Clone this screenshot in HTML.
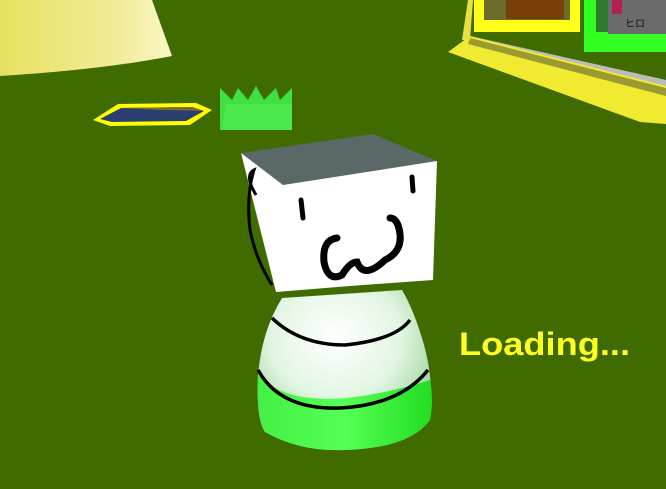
<!DOCTYPE html>
<html><head><style>html,body{margin:0;padding:0;background:#3f6b00;overflow:hidden}</style></head>
<body>
<svg width="666" height="484" viewBox="0 0 666 484" xmlns="http://www.w3.org/2000/svg">
<defs>
<linearGradient id="cone" x1="0" y1="0" x2="1" y2="0">
<stop offset="0" stop-color="#e8e060"/><stop offset="0.7" stop-color="#f2ec9a"/><stop offset="1" stop-color="#fbf7c8"/></linearGradient>
<radialGradient id="body" cx="0.45" cy="0.3" r="0.75">
<stop offset="0" stop-color="#ffffff"/><stop offset="0.5" stop-color="#e2f5e2"/><stop offset="1" stop-color="#7fc87f"/></radialGradient>
<linearGradient id="band" x1="0" y1="0" x2="1" y2="0">
<stop offset="0" stop-color="#44f044"/><stop offset="0.5" stop-color="#55ff55"/><stop offset="1" stop-color="#22dd22"/></linearGradient>
</defs>
<rect width="666" height="484" fill="#3f6b00"/>
<path d="M0 0 L152 0 L172 56 Q100 70 0 76 Z" fill="url(#cone)"/>
<path d="M470 36 L666 80 L666 122 L455 52 Z" fill="#bcbcbc"/>
<path d="M448 52 L470 36 L666 86 L666 124 L640 122 Z" fill="#f0ea30"/>
<path d="M470 38 L666 88 L666 96 L468 44Z" fill="#9a9a30"/>
<path d="M462 40 L468 0 L473 0 L470 40Z" fill="#e8e040"/>
<rect x="474" y="0" width="106" height="32" fill="#ffff1a"/>
<rect x="484" y="0" width="86" height="20" fill="#6b6b2a"/>
<rect x="506" y="0" width="58" height="19" fill="#7a3e08"/>
<rect x="584" y="0" width="82" height="52" fill="#33ff22"/>
<rect x="596" y="0" width="70" height="32" fill="#2f7a2f"/>
<rect x="608" y="0" width="58" height="34" fill="#6b6b6b"/>
<rect x="612" y="0" width="10" height="14" fill="#b02050"/>
<text x="625" y="27" font-family="Liberation Sans, Noto Sans CJK JP, sans-serif" font-size="10" fill="#111">ヒロ</text>
<path d="M93 120 L118 104 L196 103 L212 110 L190 125 L110 126 Z" fill="#ffff00"/>
<path d="M100 119 L121 108 L192 107 L204 111 L186 121 L112 122 Z" fill="#2b3e70"/>
<path d="M120 108 L192 107 L204 111 L160 110Z" fill="#7a6a30"/>
<path d="M220 130 L220 88 L232 100 L238 88 L248 100 L256 86 L264 100 L276 88 L280 100 L292 88 L292 130 Z" fill="#40e040"/>
<path d="M222 130 L226 104 L250 104 L292 104 L292 130Z" fill="#4de84d"/>
<path d="M282 298 Q262 330 258 375 Q256 420 265 432 Q300 452 345 450 Q410 448 430 420 Q434 380 424 345 Q414 310 402 290 Z" fill="url(#body)"/>
<path d="M258 375 Q300 420 430 380 Q434 400 430 420 Q410 448 345 450 Q300 452 265 432 Q256 415 258 375Z" fill="url(#band)"/>
<path d="M272 318 Q300 345 345 345 Q395 340 410 320" fill="none" stroke="#000" stroke-width="3.5"/>
<path d="M258 370 Q280 410 340 408 Q400 405 428 370" fill="none" stroke="#000" stroke-width="3.5"/>
<path d="M241 153 L373 134 L437 161 L283 185 Z" fill="#5a6868"/>
<path d="M241 153 L283 185 L437 161 L433 280 L350 286 L276 292 Z" fill="#ffffff"/>
<path d="M256 195 Q244 175 254 170 Q246 195 250 230 Q256 260 272 285" fill="none" stroke="#000" stroke-width="3"/>
<path d="M301 200 L303 218" stroke="#000" stroke-width="5" stroke-linecap="round"/>
<path d="M412 177 L413 191" stroke="#000" stroke-width="5" stroke-linecap="round"/>
<path d="M337 238 Q322 240 324 262 Q328 282 342 275 Q350 262 357 262 Q364 280 385 260 Q406 250 398 225 Q395 218 390 218" fill="none" stroke="#000" stroke-width="7" stroke-linecap="round"/>
<text x="459" y="355" font-family="Liberation Sans, sans-serif" font-size="32" font-weight="bold" fill="#ffff22" textLength="171" lengthAdjust="spacingAndGlyphs">Loading...</text>
</svg>
</body></html>
